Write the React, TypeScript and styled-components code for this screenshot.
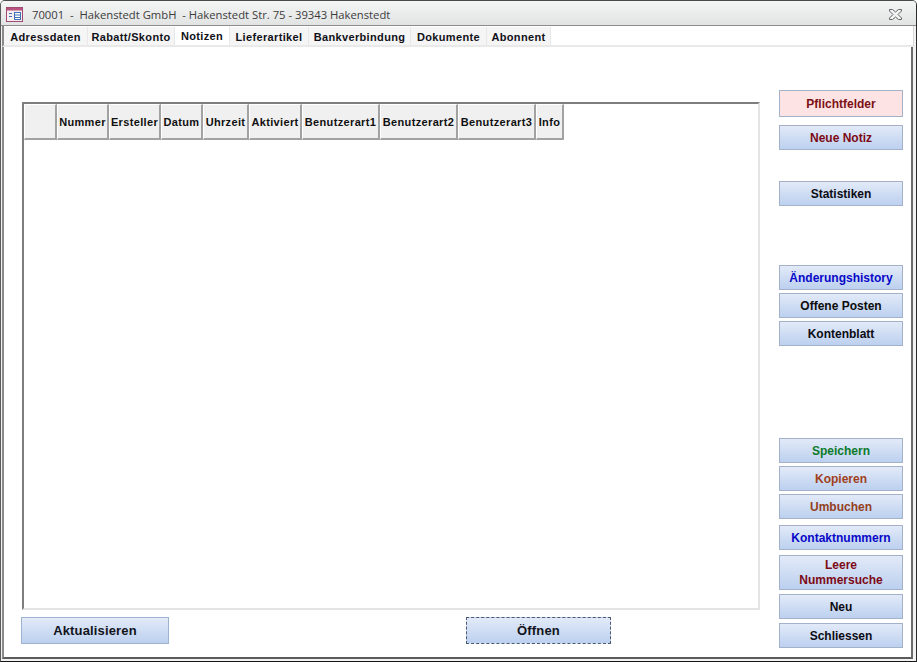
import styled, { createGlobalStyle } from "styled-components";

const GlobalStyle = createGlobalStyle`
    html, body {
        margin: 0;
        padding: 0;
        background: #ffffff;
    }
    * {
        box-sizing: border-box;
    }
`

type SideButtonType = {
    label: string;
    color: string;
    top: number;
    height?: number;
    pink?: boolean;
};

const tabs = [
    {label: "Adressdaten", width: 84},
    {label: "Rabatt/Skonto", width: 87},
    {label: "Notizen", width: 55, active: true},
    {label: "Lieferartikel", width: 79},
    {label: "Bankverbindung", width: 102},
    {label: "Dokumente", width: 76},
    {label: "Abonnent", width: 64},
];

const columns = [
    {label: "", width: 33},
    {label: "Nummer", width: 52},
    {label: "Ersteller", width: 52},
    {label: "Datum", width: 42},
    {label: "Uhrzeit", width: 46},
    {label: "Aktiviert", width: 53},
    {label: "Benutzerart1", width: 78},
    {label: "Benutzerart2", width: 78},
    {label: "Benutzerart3", width: 78},
    {label: "Info", width: 28},
];

const sideButtons: SideButtonType[] = [
    {label: "Pflichtfelder", color: "#7c1016", top: 0, height: 27, pink: true},
    {label: "Neue Notiz", color: "#7c0a16", top: 8},
    {label: "Statistiken", color: "#0c0c14", top: 31},
    {label: "Änderungshistory", color: "#0808c8", top: 59},
    {label: "Offene Posten", color: "#0c0c0c", top: 3},
    {label: "Kontenblatt", color: "#0c0c14", top: 3},
    {label: "Speichern", color: "#0b7a2b", top: 92},
    {label: "Kopieren", color: "#a0401c", top: 3},
    {label: "Umbuchen", color: "#94401c", top: 3},
    {label: "Kontaktnummern", color: "#0808c8", top: 6},
    {label: "Leere Nummersuche", color: "#7c0a16", top: 5, height: 35},
    {label: "Neu", color: "#0c0c14", top: 4},
    {label: "Schliessen", color: "#0c0c14", top: 4},
];

const FormIcon = () => (
    <svg width="17" height="15" viewBox="0 0 17 15">
        <rect x="0.5" y="0.5" width="16" height="14" fill="#f7eef2" stroke="#a04a72"/>
        <rect x="1" y="1" width="15" height="2.5" fill="#b8527f"/>
        <path d="M3 6.5h3M3 9.5h3" stroke="#3f6fb5" strokeWidth="1.2"/>
        <rect x="8.5" y="5.5" width="6" height="7" fill="#ffffff" stroke="#3f6fb5"/>
        <path d="M9 8h5M9 10.500h5" stroke="#3f6fb5"/>
    </svg>
);

const CloseIcon = () => (
    <svg width="13" height="11" viewBox="0 0 13 11">
        <path
            d="M0.500 0.500h3l3 2.500 3-2.500h3v1.500l-3.500 3.500 3.500 3.500v1.500h-3l-3-2.500-3 2.500h-3v-1.500l3.500-3.500-3.500-3.500z"
            fill="#f2f2f2"
            stroke="#64666a"
        />
    </svg>
);

const App = () => {
    return (
        <Window>
            <GlobalStyle/>
            <TitleBar>
                <FormIcon/>
                <TitleText>70001  -  Hakenstedt GmbH  - Hakenstedt Str. 75 - 39343 Hakenstedt</TitleText>
                <CloseBox><CloseIcon/></CloseBox>
            </TitleBar>
            <TabStrip>
                {tabs.map(tab => (
                    <Tab key={tab.label} $width={tab.width} $active={tab.active}>{tab.label}</Tab>
                ))}
            </TabStrip>
            <Body>
                <MainColumn>
                    <Grid>
                        <HeaderRow>
                            {columns.map(col => (
                                <HeaderCell key={col.label || "corner"} $width={col.width}>{col.label}</HeaderCell>
                            ))}
                        </HeaderRow>
                    </Grid>
                    <BottomRow>
                        <WideButton $width={148}>Aktualisieren</WideButton>
                        <WideButton $width={145} $focused>Öffnen</WideButton>
                    </BottomRow>
                </MainColumn>
                <SideColumn>
                    {sideButtons.map(btn => (
                        <SideButton
                            key={btn.label}
                            $color={btn.color}
                            $top={btn.top}
                            $height={btn.height ?? 25}
                            $pink={btn.pink}
                        >
                            {btn.label}
                        </SideButton>
                    ))}
                </SideColumn>
            </Body>
        </Window>
    );
};

export default App;

const Window = styled.div`
    width: 917px;
    height: 662px;
    display: flex;
    flex-direction: column;
    background: #f2f2f2;
    border-top: 1px solid #4a4a4a;
    border-left: 1px solid #5a5a5a;
    border-right: 1px solid #2a2a2a;
    border-bottom: 1px solid #161616;
    border-radius: 5px 5px 0 0;
    overflow: hidden;
`

const TitleBar = styled.div`
    height: 25px;
    flex: none;
    display: flex;
    align-items: center;
    padding: 2px 14px 0 5px;
    background: linear-gradient(#f4f5f5, #e2e3e3);
    border-bottom: 1px solid #8a8c8e;
`

const TitleText = styled.span`
    margin-left: 9px;
    flex: 1;
    font-family: "Open Sans", sans-serif;
    font-size: 11.250px;
    color: #3c3c3c;
    white-space: pre;
`

const CloseBox = styled.span`
    display: flex;
`

const TabStrip = styled.div`
    height: 21px;
    flex: none;
    display: flex;
    margin: 0 2px 0 1px;
    padding-top: 1px;
    background: #ffffff;
    border-left: 2px solid #8a8a8a;
    border-right: 1px solid #d8d8d8;
    border-bottom: 2px solid #e9e9e9;
`

const Tab = styled.div<{ $width: number; $active?: boolean }>`
    width: ${props => props.$width}px;
    height: ${props => (props.$active ? 19 : 18)}px;
    margin-top: ${props => (props.$active ? -1 : 0)}px;
    padding: ${props => (props.$active ? 0 : 2)}px 0 0;
    display: flex;
    align-items: center;
    justify-content: center;
    background: ${props => (props.$active ? "#ffffff" : "#f5f5f5")};
    border-right: 1px solid #e8e8e8;
    font-family: "Liberation Sans", Arial, sans-serif;
    font-size: 11px;
    font-weight: 700;
    letter-spacing: 0.35px;
    color: #101018;
`

const Body = styled.div`
    flex: 1;
    display: flex;
    margin: 0 3px 2px 1px;
    background: #ffffff;
    border-left: 2px solid #8a8a8a;
    border-right: 2px solid #6c6c6c;
    border-bottom: 2px solid #5c5c5c;
    min-height: 0;
`

const MainColumn = styled.div`
    width: 775px;
    flex: none;
    display: flex;
    flex-direction: column;
    padding: 55px 0 13px 17px;
`

const Grid = styled.div`
    width: 738px;
    margin-left: 1px;
    flex: 1;
    border-top: 2px solid #7e7e7e;
    border-left: 2px solid #7e7e7e;
    border-right: 2px solid #e4e4e4;
    border-bottom: 2px solid #e4e4e4;
    min-height: 0;
`

const HeaderRow = styled.div`
    display: flex;
`

const HeaderCell = styled.div<{ $width: number }>`
    width: ${props => props.$width}px;
    height: 36px;
    flex: none;
    display: flex;
    align-items: center;
    justify-content: center;
    background: #f0f0f0;
    border-top: 1px solid #ffffff;
    border-left: 1px solid #ffffff;
    border-right: 2px solid #a2a2a2;
    border-bottom: 2px solid #a2a2a2;
    font-family: "Liberation Sans", Arial, sans-serif;
    font-size: 11px;
    font-weight: 700;
    letter-spacing: 0.35px;
    color: #101010;
    white-space: nowrap;
`

const BottomRow = styled.div`
    display: flex;
    justify-content: space-between;
    flex: none;
    margin-top: 7px;
    padding: 0 168px 0 0;
`

const WideButton = styled.button<{ $width: number; $focused?: boolean }>`
    width: ${props => props.$width}px;
    height: 27px;
    padding: 0;
    background: linear-gradient(#e2eaf8, #bcd0ef);
    border: 1px ${props => (props.$focused ? "dashed #4a5a72" : "solid #9db3d2")};
    font-family: "Liberation Sans", Arial, sans-serif;
    font-size: 13px;
    font-weight: 700;
    letter-spacing: 0.15px;
    color: #12141c;
`

const SideColumn = styled.div`
    width: 124px;
    flex: none;
    padding-top: 43px;
    display: flex;
    flex-direction: column;
`

const SideButton = styled.button<{ $color: string; $top: number; $height: number; $pink?: boolean }>`
    width: 124px;
    height: ${props => props.$height}px;
    flex: none;
    margin-top: ${props => props.$top}px;
    padding: ${props => (props.$height === 35 ? 0 : 2)}px 6px 0;
    background: ${props => (props.$pink ? "#fde3e3" : "linear-gradient(#e2eaf8, #bcd0ef)")};
    border: 1px solid #a3b2c8;
    font-family: "Liberation Sans", Arial, sans-serif;
    font-size: 12px;
    line-height: 15px;
    font-weight: 700;
    color: ${props => props.$color};
`
